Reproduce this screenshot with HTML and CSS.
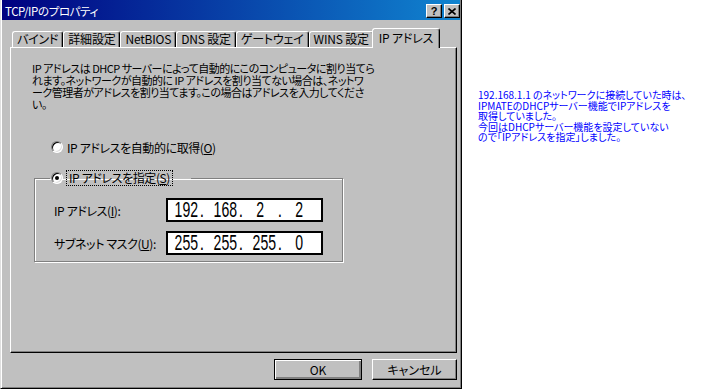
FILE: index.html
```html
<!DOCTYPE html>
<html>
<head>
  <title>TCP/IPのプロパティ</title>
  <link rel="stylesheet" href="styles.css">
</head>
<body>
  <div class="page">
    <div class="window">
      <div class="titlebar">
        <span class="title">TCP/IPのプロパティ</span>
        <div class="caption-buttons">
          <span class="cap-btn">?</span>
          <span class="cap-btn">
            <svg width="8" height="7" viewBox="0 0 8 7"><path d="M0.5 0.5 L7.5 6.5 M7.5 0.5 L0.5 6.5" stroke="#000" stroke-width="1.6"/></svg>
          </span>
        </div>
      </div>

      <div class="dialog-body">
        <div class="tabs">
          <div class="tab">バインド</div>
          <div class="tab">詳細設定</div>
          <div class="tab">NetBIOS</div>
          <div class="tab">DNS 設定</div>
          <div class="tab">ゲートウェイ</div>
          <div class="tab">WINS 設定</div>
          <div class="tab selected">IP アドレス</div>
        </div>

        <div class="panel">
          <p class="desc">
            IP アドレスは DHCP サーバーによって自動的にこのコンピュータに割り当てら<br>
            れます。ネットワークが自動的に IP アドレスを割り当てない場合は、ネットワ<br>
            ーク管理者がアドレスを割り当てます。この場合はアドレスを入力してくださ<br>
            い。
          </p>

          <div class="radio-row auto">
            <span class="radio"></span>
            <span>IP アドレスを自動的に取得(<u>O</u>)</span>
          </div>

          <fieldset class="group">
            <legend class="radio-row">
              <span class="radio checked"></span>
              <span class="focus">IP アドレスを指定(<u>S</u>)</span>
            </legend>

            <div class="field-row">
              <label>IP アドレス(<u>I</u>):</label>
              <div class="ip-field">
                <span class="oct"><span>192</span></span><span class="dot">.</span>
                <span class="oct"><span>168</span></span><span class="dot">.</span>
                <span class="oct"><span>2</span></span><span class="dot">.</span>
                <span class="oct"><span>2</span></span>
              </div>
            </div>

            <div class="field-row">
              <label>サブネット マスク(<u>U</u>):</label>
              <div class="ip-field">
                <span class="oct"><span>255</span></span><span class="dot">.</span>
                <span class="oct"><span>255</span></span><span class="dot">.</span>
                <span class="oct"><span>255</span></span><span class="dot">.</span>
                <span class="oct"><span>0</span></span>
              </div>
            </div>
          </fieldset>
        </div>

        <div class="buttons">
          <button class="btn default">OK</button>
          <button class="btn cancel">キャンセル</button>
        </div>
      </div>
    </div>

    <div class="note">
      192.168.1.1 のネットワークに接続していた時は、<br>
      IPMATEのDHCPサーバー機能でIPアドレスを<br>
      取得していました。<br>
      今回はDHCPサーバー機能を設定していない<br>
      ので「IPアドレスを指定」しました。
    </div>
  </div>
</body>
</html>
```

FILE: styles.css
```css
body {
  margin: 0;
  background-color: #fff;
  font-family: "Noto Sans CJK JP", "Liberation Sans", sans-serif;
  font-size: 12px;
  font-feature-settings: "palt";
  letter-spacing: -0.4px;
  color: #000;
}
.page {
  display: flex;
  align-items: flex-start;
}
.window {
  width: 462px;
  height: 389px;
  box-sizing: border-box;
  background-color: #c0c0c0;
  border: 1px solid;
  border-top: 0;
  border-color: #000 #000 #000 #dfdfdf;
  box-shadow: inset 1px 0 0 #fff, inset -1px -1px 0 #808080;
  padding: 0 1px;
}
.titlebar {
  height: 20px;
  box-sizing: border-box;
  padding: 2px 0 0 3px;
  background: linear-gradient(to right, #000080, #1084d0);
  color: #fff;
  display: flex;
  align-items: center;
  justify-content: space-between;
  font-size: 11.5px;
}
.caption-buttons {
  display: flex;
  gap: 2px;
}
.cap-btn {
  width: 16px;
  height: 14px;
  box-sizing: border-box;
  background-color: #c0c0c0;
  border: 1px solid;
  border-color: #fff #000 #000 #fff;
  box-shadow: inset -1px -1px 0 #808080;
  display: flex;
  align-items: center;
  justify-content: center;
  color: #000;
  font-family: "Liberation Sans", sans-serif;
  font-weight: bold;
  font-size: 11px;
  letter-spacing: 0;
}
.dialog-body {
  padding: 8px 3px 0 8px;
}
.tabs {
  display: flex;
  align-items: flex-end;
  height: 19px;
  padding-left: 2px;
  position: relative;
  z-index: 1;
  letter-spacing: -0.2px;
}
.tab {
  height: 16px;
  box-sizing: border-box;
  padding: 0 4px;
  line-height: 14px;
  border: 1px solid;
  border-bottom: 0;
  border-color: #fff #000 transparent #fff;
  box-shadow: inset -1px 0 0 #808080;
  border-radius: 3px 3px 0 0;
  white-space: nowrap;
}
.tab.selected {
  height: 20px;
  margin: 0 -2px -1px;
  padding: 0 6px;
  line-height: 17px;
  background-color: #c0c0c0;
}
.panel {
  height: 306px;
  box-sizing: border-box;
  border: 1px solid;
  border-color: #fff #000 #000 #fff;
  box-shadow: inset -1px -1px 0 #808080;
  padding: 14px 0 0 21px;
}
.desc {
  margin: 0;
  font-size: 11px;
  letter-spacing: -0.5px;
  line-height: 12px;
  white-space: nowrap;
}
.radio-row {
  display: flex;
  align-items: center;
  gap: 4px;
  height: 16px;
}
.radio-row.auto {
  margin: 29px 0 0 19px;
}
.radio {
  width: 12px;
  height: 12px;
  box-sizing: border-box;
  border-radius: 50%;
  border: 1px solid;
  border-color: #808080 #fff #fff #808080;
  box-shadow: inset 1px 1px 0 #000, inset -1px -1px 0 #dfdfdf;
  background-color: #fff;
  position: relative;
}
.radio.checked::after {
  content: "";
  position: absolute;
  left: 3px;
  top: 3px;
  width: 4px;
  height: 4px;
  border-radius: 50%;
  background-color: #000;
}
.group {
  width: 309px;
  box-sizing: border-box;
  margin: 15px 0 0 2px;
  padding: 12px 0 6px 19px;
  border: 1px solid #808080;
  box-shadow: 1px 1px 0 #fff, inset 1px 1px 0 #fff;
}
.group legend {
  width: 141px;
  box-sizing: border-box;
  margin-left: -4px;
  padding: 0 0 0 1px;
}
.focus {
  outline: 1px dotted #000;
  padding: 0 2px;
  line-height: 14px;
}
.field-row {
  display: flex;
  align-items: center;
}
.field-row + .field-row {
  margin-top: 9px;
}
.field-row label {
  width: 112px;
}
.ip-field {
  width: 157px;
  height: 24px;
  box-sizing: border-box;
  border: 2px solid #000;
  background-color: #fff;
  display: flex;
  align-items: center;
  padding-left: 0;
  font-family: "Liberation Sans", sans-serif;
  font-size: 22px;
  line-height: 20px;
  letter-spacing: 0;
}
.oct {
  width: 29px;
  text-align: center;
}
.oct span {
  display: inline-block;
  transform: scaleX(0.64);
}
.dot {
  width: 10px;
  text-align: center;
  transform: scaleX(0.7);
}
.buttons {
  display: flex;
  justify-content: flex-end;
  gap: 10px;
  margin-top: 6px;
}
.btn {
  height: 21px;
  box-sizing: border-box;
  padding: 0;
  background-color: #c0c0c0;
  border: 1px solid;
  border-color: #fff #000 #000 #fff;
  box-shadow: inset -1px -1px 0 #808080;
  font-family: "Noto Sans CJK JP", sans-serif;
  font-feature-settings: "palt";
  font-size: 12px;
  color: #000;
}
.btn.default {
  width: 88px;
  border-color: #000;
  box-shadow: inset 1px 1px 0 #fff, inset -2px -2px 0 #808080;
}
.btn.cancel {
  width: 85px;
}
.note {
  padding: 90px 0 0 16px;
  font-size: 10px;
  letter-spacing: 0;
  line-height: 10.5px;
  color: #0000ff;
}
```
